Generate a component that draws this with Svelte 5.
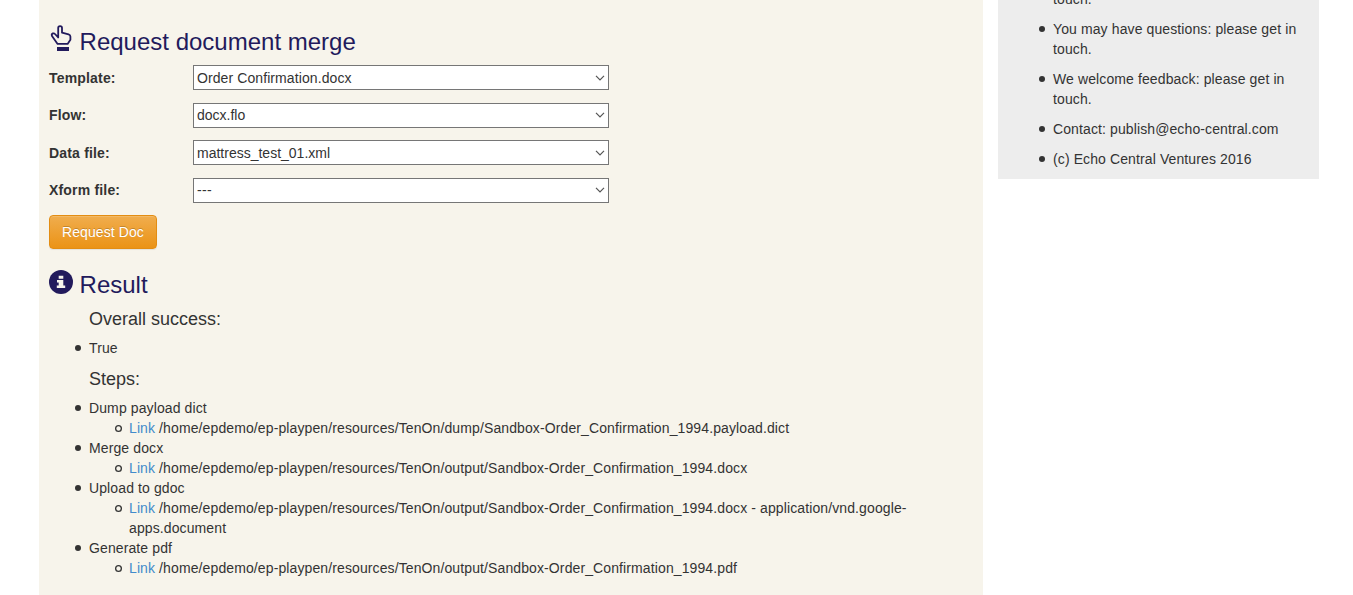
<script>
  const fields = [
    { id: 'template', label: 'Template:', value: 'Order Confirmation.docx', spacing: 0.09 },
    { id: 'flow', label: 'Flow:', value: 'docx.flo', spacing: 0 },
    { id: 'data', label: 'Data file:', value: 'mattress_test_01.xml', spacing: 0 },
    { id: 'xform', label: 'Xform file:', value: '---', spacing: 0.3 }
  ];

  const base = '/home/epdemo/ep-playpen/resources/TenOn/';
  const steps = [
    { name: 'Dump payload dict', path: base + 'dump/Sandbox-Order_Confirmation_1994.payload.dict' },
    { name: 'Merge docx', path: base + 'output/Sandbox-Order_Confirmation_1994.docx' },
    {
      name: 'Upload to gdoc',
      path: base + 'output/Sandbox-Order_Confirmation_1994.docx - application/vnd.google-apps.document'
    },
    { name: 'Generate pdf', path: base + 'output/Sandbox-Order_Confirmation_1994.pdf' }
  ];

  const notes = [
    'Something not working: please get in touch.',
    'You may have questions: please get in touch.',
    'We welcome feedback: please get in touch.',
    'Contact: publish@echo-central.com',
    '(c) Echo Central Ventures 2016'
  ];
</script>

<div class="page">
  <main>
    <h3>
      <svg width="24" height="28" viewBox="0 0 24 28" fill="none">
        <path
          d="M9.2 12.4V3C9.2 .4 13 .4 13 3V7.7L19.6 9.3Q21.4 9.9 21.4 11.6V14.8L18.6 18.9H8.6L3 11Q2.2 9.1 3.8 8.4Q5.2 8 6 9L9.2 12.4"
          stroke="#221a5c"
          stroke-width="1.8"
          stroke-linejoin="round"
          stroke-linecap="round"
        />
        <rect x="8" y="22" width="12" height="4" fill="#221a5c" />
      </svg>
      <span>Request document merge</span>
    </h3>

    <form onsubmit={(e) => e.preventDefault()}>
      {#each fields as f (f.id)}
        <div class="row">
          <label for={f.id}>{f.label}</label>
          <div class="select">
            <select id={f.id} style="letter-spacing: {f.spacing}px"><option>{f.value}</option></select>
            <svg class="chevron" width="10" height="6" viewBox="0 0 10 6" fill="none">
              <path d="M1 .8L5 4.8L9 .8" stroke="#555" stroke-width="1.2" />
            </svg>
          </div>
        </div>
      {/each}
      <button type="submit">Request Doc</button>
    </form>

    <h3 class="result">
      <svg width="24" height="24" viewBox="0 0 24 24">
        <circle cx="12" cy="12" r="12" fill="#221a5c" />
        <path
          d="M9.7 5.8H14.3V8.7H9.7ZM8 10H14.3V15.5H16.2V18H7.8V15.5H9.7V12.5H8Z"
          fill="#f7f4eb"
        />
      </svg>
      <span>Result</span>
    </h3>

    <h4>Overall success:</h4>
    <ul class="outcome">
      <li>True</li>
    </ul>
    <h4>Steps:</h4>
    <ul>
      {#each steps as s (s.name)}
        <li>
          {s.name}
          <ul class="inner">
            <li><a href="#link">Link</a> {s.path}</li>
          </ul>
        </li>
      {/each}
    </ul>
  </main>

  <aside>
    <ul>
      {#each notes as n (n)}
        <li>{n}</li>
      {/each}
    </ul>
  </aside>
</div>

<style>
  :global(body) {
    margin: 0;
    background: #fff;
  }
  .page {
    box-sizing: border-box;
    width: 1353px;
    height: 595px;
    padding-left: 39px;
    display: flex;
    align-items: flex-start;
    gap: 15px;
    overflow: hidden;
    font: 14px/20px 'Liberation Sans', Arial, sans-serif;
    letter-spacing: 0.11px;
    color: #333;
  }
  main {
    box-sizing: border-box;
    width: 944px;
    height: 595px;
    padding: 25px 10px 0;
    background: #f7f4eb;
  }
  h3 {
    margin: 0;
    height: 40px;
    display: flex;
    align-items: flex-start;
    gap: 6.6px;
    font-size: 24px;
    font-weight: 400;
    line-height: 26px;
    letter-spacing: 0;
    color: #221a5c;
  }
  h3 span {
    padding-top: 4px;
  }
  h3.result {
    margin-top: 20px;
    height: 38px;
  }
  h3.result svg {
    margin-top: 1px;
  }
  h3.result span {
    padding-top: 3px;
  }
  form {
    display: flex;
    flex-direction: column;
    align-items: flex-start;
    gap: 12.5px;
  }
  .row {
    display: flex;
    height: 25px;
  }
  label {
    box-sizing: border-box;
    width: 144px;
    height: 25px;
    padding-top: 0.5px;
    font-weight: 700;
    line-height: 25px;
    letter-spacing: 0.18px;
  }
  .select {
    display: grid;
    width: 416px;
    height: 25px;
  }
  select {
    grid-area: 1 / 1;
    box-sizing: border-box;
    width: 416px;
    height: 25px;
    margin: 0;
    padding: 0 3px;
    border: 1px solid #767676;
    border-radius: 0;
    appearance: none;
    background: #fff;
    color: #333;
    font: inherit;
  }
  .chevron {
    grid-area: 1 / 1;
    place-self: center end;
    margin-right: 4px;
    pointer-events: none;
  }
  button {
    width: 108px;
    height: 34px;
    margin: 0;
    padding: 0;
    border: 1px solid #e38d13;
    border-radius: 4px;
    background: linear-gradient(#f0ad4e, #eb9316);
    box-shadow:
      inset 0 1px 0 rgba(255, 255, 255, 0.15),
      0 1px 1px rgba(0, 0, 0, 0.075);
    color: #fff;
    font: inherit;
    letter-spacing: 0.09px;
    text-shadow: 0 -1px 0 rgba(0, 0, 0, 0.2);
  }
  h4 {
    margin: 0 0 0 40px;
    padding: 2px 0 9px;
    font-size: 18px;
    font-weight: 400;
    line-height: 20px;
    letter-spacing: 0;
  }
  ul {
    margin: 0;
    padding: 0 0 0 40px;
    list-style: none;
  }
  .outcome {
    margin-bottom: 9px;
  }
  li {
    position: relative;
  }
  li::before {
    content: '';
    box-sizing: border-box;
    position: absolute;
    left: -14px;
    top: 7px;
    width: 6px;
    height: 6px;
    border-radius: 50%;
    background: #333;
  }
  .inner li::before {
    width: 7px;
    height: 7px;
    left: -14.5px;
    background: none;
    box-shadow: inset 0 0 0 1.3px #333;
  }
  a {
    color: #428bca;
    text-decoration: none;
  }
  aside {
    box-sizing: border-box;
    width: 321px;
    height: 179px;
    padding: 0 15px;
    background: #ededed;
    overflow: hidden;
  }
  aside ul {
    display: flex;
    flex-direction: column;
    gap: 10px;
    margin-top: -31px;
  }
</style>
